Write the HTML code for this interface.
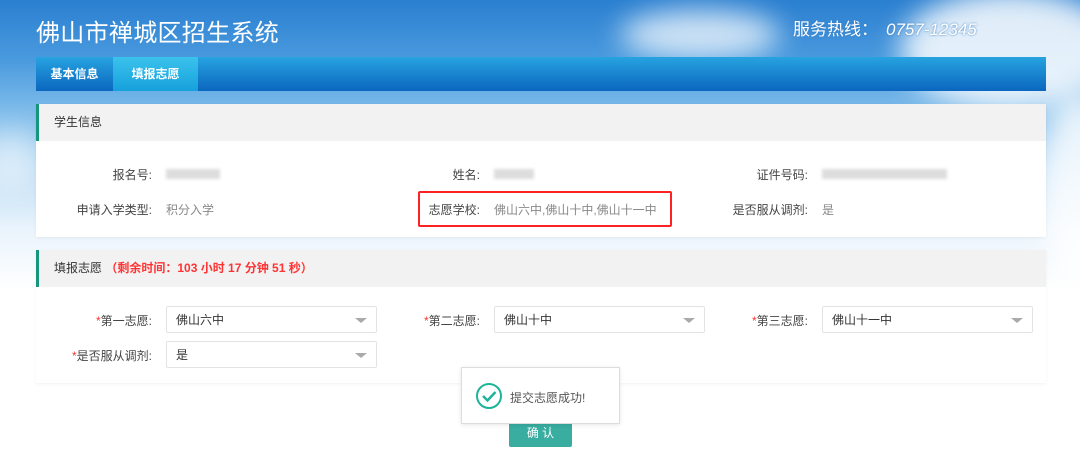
<!DOCTYPE html>
<html><head><meta charset="utf-8"><style>
*{margin:0;padding:0;box-sizing:border-box}
body{width:1080px;height:472px;overflow:hidden;font-family:"Liberation Sans","Noto Sans CJK SC",sans-serif;font-size:12px;color:#555;position:relative;
background:linear-gradient(180deg,#2a7fd0 0px,#4a9ade 60px,#7dbbea 110px,#bcdcf4 170px,#eaf4fc 230px,#ffffff 290px);}
.cloud{position:absolute;border-radius:50%;background:rgba(255,255,255,.75);filter:blur(14px)}
.abs{position:absolute}
.title{left:36px;top:13px;font-size:24px;color:#fff;letter-spacing:0.3px}
.hot{left:793px;top:15px;font-size:17px;color:#fff;text-shadow:0 0 2px #3a7cc0}
.hot i{font-size:17px;margin-left:8px}
.nav{left:36px;top:57px;width:1010px;height:34px;background:linear-gradient(180deg,#27a3e0,#0b66bf)}
.tab{position:absolute;top:0;height:34px;line-height:34px;color:#fff;font-size:12px;text-align:center;font-weight:bold}
.panel{left:36px;width:1010px;background:#fff;box-shadow:0 1px 3px rgba(0,0,0,.06)}
.ph{height:37px;background:#f2f2f2;border-left:3px solid #16967c;padding-left:15px;line-height:37px;color:#333;font-size:12px}
.lab{position:absolute;text-align:right;width:150px;color:#444}
.val{position:absolute;color:#888}
.blur{position:absolute;height:10px;background:#ddd;filter:blur(1.5px)}
.sel{position:absolute;width:211px;height:27px;border:1px solid #e3e3e3;border-radius:2px;background:#fff;color:#333;padding-left:9px;line-height:26px}
.sel:after{content:"";position:absolute;right:9px;top:11px;border:6px solid transparent;border-top:5px solid #aaa;border-bottom:0}
.req{color:#f33}
</style></head><body>
<div class="cloud" style="left:620px;top:10px;width:160px;height:50px"></div>
<div class="cloud" style="left:900px;top:-10px;width:220px;height:120px;background:rgba(255,255,255,.85)"></div>
<div class="cloud" style="left:1040px;top:90px;width:80px;height:200px;background:rgba(255,255,255,.8)"></div>
<div class="cloud" style="left:-20px;top:130px;width:60px;height:60px;background:rgba(255,255,255,.5)"></div>
<div class="abs title">佛山市禅城区招生系统</div>
<div class="abs hot">服务热线：<i>0757-12345</i></div>
<div class="abs nav">
<div class="tab" style="left:0;width:77px">基本信息</div>
<div class="tab" style="left:77px;width:85px;background:linear-gradient(180deg,#3bc3ec,#16a0dc)">填报志愿</div>
</div>
<div class="abs panel" style="top:104px;height:133px">
<div class="ph">学生信息</div>
<div class="lab" style="left:-34px;top:62px">报名号:</div><div class="blur" style="left:130px;top:65px;width:54px"></div>
<div class="lab" style="left:294px;top:62px">姓名:</div><div class="blur" style="left:458px;top:65px;width:40px"></div>
<div class="lab" style="left:622px;top:62px">证件号码:</div><div class="blur" style="left:786px;top:65px;width:125px"></div>
<div class="lab" style="left:-34px;top:97px">申请入学类型:</div><div class="val" style="left:130px;top:97px">积分入学</div>
<div class="lab" style="left:294px;top:97px">志愿学校:</div><div class="val" style="left:458px;top:97px">佛山六中,佛山十中,佛山十一中</div>
<div class="lab" style="left:622px;top:97px">是否服从调剂:</div><div class="val" style="left:786px;top:97px">是</div>
<div class="abs" style="left:382px;top:87px;width:254px;height:36px;border:2px solid #f22;border-radius:2px"></div>
</div>
<div class="abs panel" style="top:250px;height:133px">
<div class="ph">填报志愿 <span style="color:#f33;font-weight:bold">（剩余时间：103 小时 17 分钟 51 秒）</span></div>
<div class="lab" style="left:-34px;top:62px"><span class="req">*</span>第一志愿:</div><div class="sel" style="left:130px;top:56px">佛山六中</div>
<div class="lab" style="left:294px;top:62px"><span class="req">*</span>第二志愿:</div><div class="sel" style="left:458px;top:56px">佛山十中</div>
<div class="lab" style="left:622px;top:62px"><span class="req">*</span>第三志愿:</div><div class="sel" style="left:786px;top:56px">佛山十一中</div>
<div class="lab" style="left:-34px;top:97px"><span class="req">*</span>是否服从调剂:</div><div class="sel" style="left:130px;top:91px">是</div>
</div>
<div class="abs" style="left:509px;top:420px;width:63px;height:27px;background:#38ada0;color:#fff;text-align:center;line-height:26px;border-radius:2px">确 认</div>
<div class="abs" style="left:461px;top:367px;width:159px;height:57px;background:#fff;border:1px solid #ddd;box-shadow:0 1px 4px rgba(0,0,0,.1)">
<svg style="position:absolute;left:13px;top:14px" width="28" height="28" viewBox="0 0 28 28"><circle cx="14" cy="14" r="12" fill="none" stroke="#1fb39a" stroke-width="2"/><path d="M8 14l4.5 4.5L20.5 10" fill="none" stroke="#1fb39a" stroke-width="2.5"/></svg>
<div class="abs" style="left:48px;top:21px;color:#555">提交志愿成功!</div>
</div>
</body></html>
